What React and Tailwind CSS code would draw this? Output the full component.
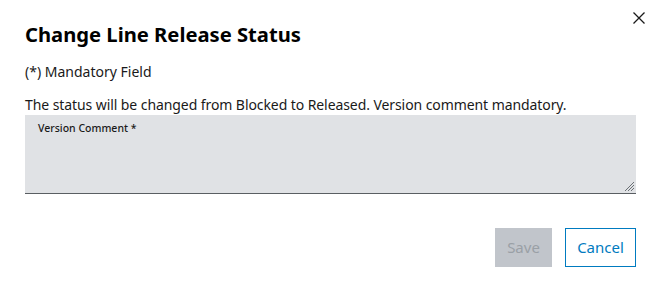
import React from "react";

export default function App() {
  return (
    <div className="w-[661px] h-[292px] bg-white relative" style={{ fontFamily: '"Noto Sans", "Open Sans", sans-serif' }}>
      <button className="absolute left-[631px] top-[10px] w-[16px] h-[16px] flex items-center justify-center text-[#1a1a1a]">
        <svg width="14" height="14" viewBox="0 0 14 14" fill="none" stroke="currentColor" strokeWidth="1.3">
          <path d="M1.5 1.5 L12.5 12.5 M12.5 1.5 L1.5 12.5" />
        </svg>
      </button>
      <div className="pl-[25px] pr-[25px] pt-[19px] flex flex-col">
        <h1 className="text-[20.2px] leading-[30px] font-bold text-black">Change Line Release Status</h1>
        <p className="mt-[13px] text-[14px] leading-[20px] text-[#1a1a1a]">(*) Mandatory Field</p>
        <p className="mt-[13px] text-[14px] leading-[20px] tracking-[-0.08px] text-[#1a1a1a]">The status will be changed from Blocked to Released. Version comment mandatory.</p>
        <div className="relative w-[611px] h-[79px] bg-[#e0e2e5] border-b border-[#595e62]">
          <span className="absolute left-[13px] top-[5px] text-[10.5px] leading-[16px] font-medium text-[#1a1a1a]">Version Comment *</span>
          <svg className="absolute right-[2px] bottom-[2px]" width="10" height="10" viewBox="0 0 10 10" stroke="#6b7075" strokeWidth="1">
            <path d="M10 1 L1 10 M10 4 L4 10 M10 7 L7 10" />
          </svg>
        </div>
        <div className="flex justify-end gap-[13px] mt-[34px]">
          <button className="w-[57px] h-[39px] bg-[#c1c5cb] text-[#9aa0a6] text-[15px]">Save</button>
          <button className="w-[71px] h-[39px] border border-[#007bc0] text-[#007bc0] text-[15px] bg-white">Cancel</button>
        </div>
      </div>
    </div>
  );
}
